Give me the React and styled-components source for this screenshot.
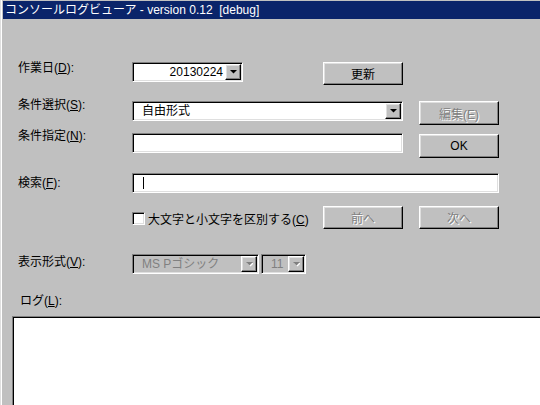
import React from 'react';
import styled, { createGlobalStyle, css } from 'styled-components';

const GlobalStyle = createGlobalStyle`
  html, body {
    margin: 0;
    padding: 0;
    overflow: hidden;
    background: #c0c0c0;
  }
`;

const uiFont = `"Liberation Sans", "Noto Sans CJK JP", sans-serif`;

const raised = css`
  border: 1px solid;
  border-color: #ffffff #000000 #000000 #ffffff;
  box-shadow: inset -1px -1px #808080, inset 1px 1px #dfdfdf;
`;

const sunken = css`
  border: 1px solid;
  border-color: #808080 #ffffff #ffffff #808080;
  box-shadow: inset 1px 1px #000000, inset -1px -1px #dfdfdf;
`;

const Window = styled.div`
  box-sizing: border-box;
  width: 540px;
  height: 405px;
  display: flex;
  flex-direction: column;
  background: #c0c0c0;
  padding: 1px 0 0 3px;
  box-shadow: inset 1px 0 #dfdfdf, inset 2px 0 #ffffff;
  font-family: ${uiFont};
  font-size: 12px;
  color: #000;
  overflow: hidden;
`;

const TitleBar = styled.div`
  height: 18px;
  line-height: 18px;
  padding-left: 2px;
  background: #0a246a;
  color: #fff;
  white-space: pre;
`;

const Client = styled.div`
  flex: 1;
  display: flex;
  flex-direction: column;
  padding-left: 15px;
  min-height: 0;
`;

const Row = styled.div`
  display: grid;
  grid-template-columns: 114px 191px 80px 16px 80px;
  align-items: start;
  height: ${({ $h }) => $h}px;
  margin-top: ${({ $gap }) => $gap}px;
`;

const Label = styled.div`
  line-height: 14px;
  margin-top: ${({ $dy }) => $dy || 0}px;
  white-space: nowrap;
`;

const Field = styled.div`
  ${sunken};
  box-sizing: border-box;
  height: 20px;
  display: flex;
  align-items: center;
  background: ${({ $disabled }) => ($disabled ? '#c0c0c0' : '#ffffff')};
  color: ${({ $disabled }) => ($disabled ? '#808080' : '#000')};
  grid-column: ${({ $span }) => $span || 'auto'};
  padding: 1px;
`;

const FieldText = styled.div`
  flex: 1;
  text-align: ${({ $right }) => ($right ? 'right' : 'left')};
  padding: ${({ $right }) => ($right ? '0 2px 0 0' : '0 0 0 8px')};
  line-height: 16px;
  white-space: nowrap;
  overflow: hidden;
`;

const Caret = styled.span`
  display: block;
  width: 1px;
  height: 12px;
  margin-left: 9px;
  background: #000;
`;

const DropBtn = styled.div`
  ${raised};
  box-sizing: border-box;
  width: 16px;
  height: 16px;
  display: flex;
  align-items: center;
  justify-content: center;
  background: #c0c0c0;
`;

const Button = styled.div`
  ${raised};
  box-sizing: border-box;
  height: ${({ $h }) => $h || 23}px;
  margin-top: ${({ $dy }) => $dy || 0}px;
  display: flex;
  align-items: center;
  justify-content: center;
  background: #c0c0c0;
  grid-column: ${({ $col }) => $col};
  color: ${({ $disabled }) => ($disabled ? '#808080' : '#000')};
  text-shadow: ${({ $disabled }) => ($disabled ? '1px 1px 0 #ffffff' : 'none')};
`;

const CheckRow = styled.div`
  grid-column: 2 / 3;
  display: flex;
  align-items: center;
  gap: 3px;
  margin-top: 4px;
  white-space: nowrap;
`;

const CheckBox = styled.span`
  ${sunken};
  box-sizing: border-box;
  width: 13px;
  height: 13px;
  background: #fff;
  flex-shrink: 0;
`;

const SizeCombos = styled.div`
  grid-column: 2 / 3;
  display: flex;
  gap: 2px;
`;

const LogLabel = styled.div`
  line-height: 14px;
  margin: 20px 0 0 2px;
`;

const LogBox = styled.div`
  ${sunken};
  flex: 1;
  margin: 8px -6px -6px -6px;
  background: #fff;
`;

const Arrow = ({ disabled }) => (
  <svg width="7" height="5" viewBox="0 0 7 5" aria-hidden="true">
    {disabled && <polygon points="1,1 8,1 4.5,4.5" fill="#fff" />}
    <polygon points="0,0 7,0 3.5,3.5" fill={disabled ? '#808080' : '#000'} />
  </svg>
);

const App = () => (
  <>
    <GlobalStyle />
    <Window>
      <TitleBar>コンソールログビューア - version 0.12  [debug]</TitleBar>
      <Client>
        <Row $gap={43} $h={23}>
          <Label $dy={-1}>作業日(<u>D</u>):</Label>
          <Field style={{ width: 111 }}>
            <FieldText $right>20130224</FieldText>
            <DropBtn><Arrow /></DropBtn>
          </Field>
          <Button>更新</Button>
        </Row>

        <Row $gap={16} $h={25}>
          <Label $dy={-3}>条件選択(<u>S</u>):</Label>
          <Field $span="2 / 4">
            <FieldText>自由形式</FieldText>
            <DropBtn><Arrow /></DropBtn>
          </Field>
          <Button $col="5" $h={24} $disabled>編集(E)</Button>
        </Row>

        <Row $gap={7} $h={25}>
          <Label $dy={-4}>条件指定(<u>N</u>):</Label>
          <Field $span="2 / 4" />
          <Button $col="5" $h={24} $dy={1}>OK</Button>
        </Row>

        <Row $gap={15} $h={20}>
          <Label $dy={3}>検索(<u>F</u>):</Label>
          <Field $span="2 / 6">
            <Caret />
          </Field>
        </Row>

        <Row $gap={13} $h={23}>
          <span />
          <CheckRow>
            <CheckBox />
            <span>大文字と小文字を区別する(<u>C</u>)</span>
          </CheckRow>
          <Button $col="3" $disabled>前へ</Button>
          <Button $col="5" $disabled>次へ</Button>
        </Row>

        <Row $gap={25} $h={20}>
          <Label $dy={1}>表示形式(<u>V</u>):</Label>
          <SizeCombos>
            <Field $disabled style={{ width: 127 }}>
              <FieldText>MS Pゴシック</FieldText>
              <DropBtn><Arrow disabled /></DropBtn>
            </Field>
            <Field $disabled style={{ width: 45 }}>
              <FieldText>11</FieldText>
              <DropBtn><Arrow disabled /></DropBtn>
            </Field>
          </SizeCombos>
        </Row>

        <LogLabel>ログ(<u>L</u>):</LogLabel>
        <LogBox />
      </Client>
    </Window>
  </>
);

export default App;
